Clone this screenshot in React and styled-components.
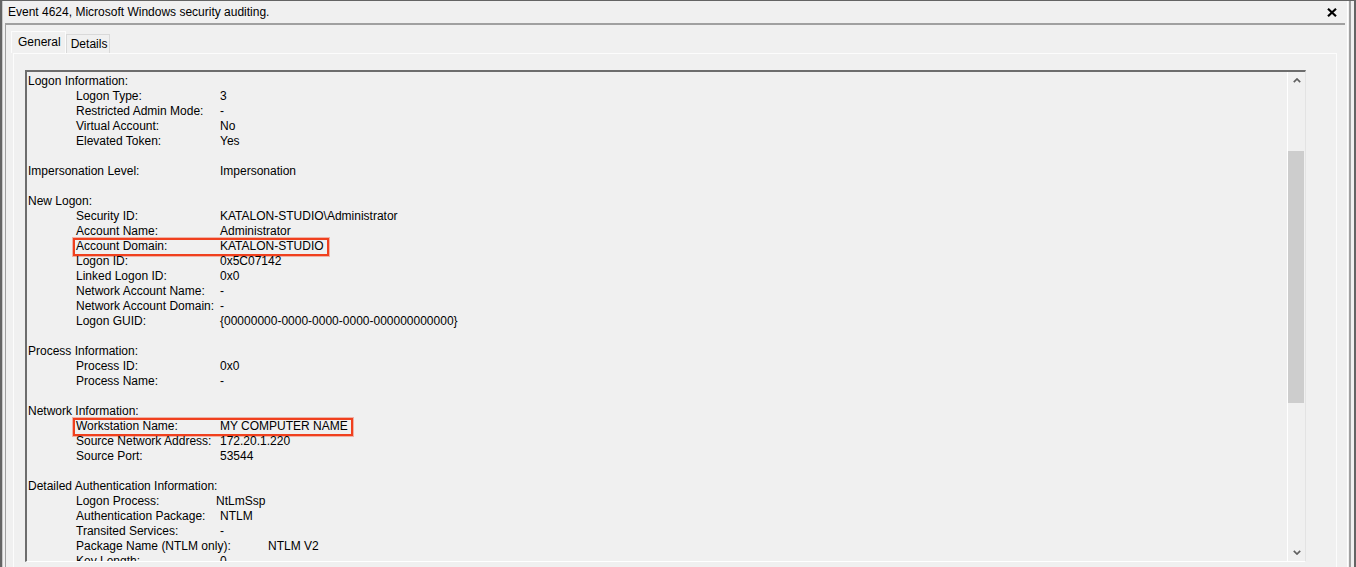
import React from 'react';
import styled, { createGlobalStyle } from 'styled-components';

const SECTIONS = [
  {
    title: 'Logon Information:',
    rows: [
      { label: 'Logon Type:', value: '3' },
      { label: 'Restricted Admin Mode:', value: '-' },
      { label: 'Virtual Account:', value: 'No' },
      { label: 'Elevated Token:', value: 'Yes' },
    ],
  },
  {
    line: { label: 'Impersonation Level:', value: 'Impersonation' },
  },
  {
    title: 'New Logon:',
    rows: [
      { label: 'Security ID:', value: 'KATALON-STUDIO\\Administrator' },
      { label: 'Account Name:', value: 'Administrator' },
      { label: 'Account Domain:', value: 'KATALON-STUDIO', marked: true },
      { label: 'Logon ID:', value: '0x5C07142' },
      { label: 'Linked Logon ID:', value: '0x0' },
      { label: 'Network Account Name:', value: '-' },
      { label: 'Network Account Domain:', value: '-' },
      { label: 'Logon GUID:', value: '{00000000-0000-0000-0000-000000000000}' },
    ],
  },
  {
    title: 'Process Information:',
    rows: [
      { label: 'Process ID:', value: '0x0' },
      { label: 'Process Name:', value: '-' },
    ],
  },
  {
    title: 'Network Information:',
    rows: [
      { label: 'Workstation Name:', value: 'MY COMPUTER NAME', marked: true },
      { label: 'Source Network Address:', value: '172.20.1.220' },
      { label: 'Source Port:', value: '53544' },
    ],
  },
  {
    title: 'Detailed Authentication Information:',
    rows: [
      { label: 'Logon Process:', value: 'NtLmSsp', nudge: -4 },
      { label: 'Authentication Package:', value: 'NTLM' },
      { label: 'Transited Services:', value: '-' },
      { label: 'Package Name (NTLM only):', value: 'NTLM V2', wide: true },
      { label: 'Key Length:', value: '0' },
    ],
  },
];

function Chevron({ down }) {
  return (
    <svg width="8" height="5" viewBox="0 0 8 5">
      <polyline
        points={down ? '0.8,0.8 4,4 7.2,0.8' : '0.8,4.2 4,1 7.2,4.2'}
        fill="none"
        stroke="#606060"
        strokeWidth="1.7"
      />
    </svg>
  );
}

function CloseIcon() {
  return (
    <svg width="10" height="9" viewBox="0 0 10 9">
      <path d="M1 0.8 L9 8.2 M9 0.8 L1 8.2" stroke="#000" strokeWidth="2.2" />
    </svg>
  );
}

function Field({ label, value, marked, nudge, wide, top }) {
  return (
    <Row $top={top}>
      <Pair $marked={marked}>
        <Label $width={top || wide ? 192 : 144}>{label}</Label>
        <Value $nudge={nudge}>{value}</Value>
      </Pair>
    </Row>
  );
}

function EventLog() {
  return (
    <LogText>
      {SECTIONS.map((section, i) => (
        <Section key={i}>
          {section.line ? (
            <Field top label={section.line.label} value={section.line.value} />
          ) : (
            <>
              <SectionTitle>{section.title}</SectionTitle>
              {section.rows.map((row) => (
                <Field key={row.label} {...row} />
              ))}
            </>
          )}
        </Section>
      ))}
    </LogText>
  );
}

function App() {
  return (
    <>
      <GlobalStyle />
      <Window>
        <Shell>
          <Header>
            <span>Event 4624, Microsoft Windows security auditing.</span>
            <CloseIcon />
          </Header>
          <Pane>
            <TabStrip>
              <Tab $active>General</Tab>
              <Tab>Details</Tab>
            </TabStrip>
            <Panel>
              <LogBox>
                <EventLog />
                <Scrollbar>
                  <ArrowButton>
                    <Chevron />
                  </ArrowButton>
                  <Track>
                    <Thumb $offset={62} $size={252} />
                  </Track>
                  <ArrowButton>
                    <Chevron down />
                  </ArrowButton>
                </Scrollbar>
              </LogBox>
            </Panel>
          </Pane>
        </Shell>
      </Window>
    </>
  );
}

const GlobalStyle = createGlobalStyle`
  html, body {
    margin: 0;
    padding: 0;
    background: #f0f0f0;
  }

  body {
    font-family: "Segoe UI", "Liberation Sans", Arial, sans-serif;
    font-size: 12px;
    color: #000000;
  }
`;

const Window = styled.div`
  height: 567px;
  box-sizing: border-box;
  display: flex;
  overflow: hidden;
  background: #f0f0f0;
  border-top: 1px solid #646464;
  border-left: 2px solid #646464;
  border-right: 2px solid #646464;
  padding-right: 3px;
`;

const Shell = styled.div`
  flex: 1;
  min-width: 0;
  display: flex;
  flex-direction: column;
  border-left: 1px solid #c8c8c8;
  border-right: 2px solid #a0a0a0;
  box-shadow: inset -1px 0 0 #f0f0f0, inset -2px 0 0 #ffffff;
`;

const Header = styled.div`
  height: 22px;
  flex: none;
  display: flex;
  align-items: center;
  justify-content: space-between;
  padding: 0 12px 0 5px;
`;

const Pane = styled.div`
  flex: 1;
  display: flex;
  flex-direction: column;
  margin: 0 4px 0 2px;
  padding: 6px 8px 0 7px;
  border-top: 2px solid #a0a0a0;
  border-left: 1px solid #a0a0a0;
`;

const TabStrip = styled.div`
  display: flex;
  align-items: flex-end;
  height: 22px;
  margin-left: -2px;
`;

const Tab = styled.div`
  box-sizing: border-box;
  height: ${(props) => (props.$active ? 22 : 19)}px;
  line-height: ${(props) => (props.$active ? 21 : 18)}px;
  padding: ${(props) => (props.$active ? '0 4px 0 6px' : '0 2px 0 4px')};
  border: 1px solid ${(props) => (props.$active ? '#fcfcfc' : '#d9d9d9')};
  border-bottom: none;
  background: #f0f0f0;
`;

const Panel = styled.div`
  flex: 1;
  border: 1px solid #fcfcfc;
  border-bottom: none;
  padding: 16px 30px 0 11px;
`;

const LogBox = styled.div`
  height: 492px;
  box-sizing: border-box;
  display: flex;
  border-style: solid;
  border-width: 2px 1px 1px 2px;
  border-color: #6d6d6d #e3e3e3 #ffffff #6d6d6d;
`;

const LogText = styled.div`
  flex: 1;
  min-width: 0;
  overflow: hidden;
  padding: 2px 0 0 1px;
  line-height: 15px;
  white-space: nowrap;
`;

const Section = styled.div`
  & + & {
    margin-top: 15px;
  }
`;

const SectionTitle = styled.div`
  height: 15px;
`;

const Row = styled.div`
  display: flex;
  height: 15px;
  padding-left: ${(props) => (props.$top ? 0 : 48)}px;
`;

const Pair = styled.span`
  position: relative;
  display: flex;

  ${(props) =>
    props.$marked &&
    `
    &::after {
      content: '';
      position: absolute;
      top: -1px;
      bottom: -2px;
      left: -3px;
      right: -5px;
      border: 2px solid #f0401e;
      box-shadow: 0 0 0 1px rgba(240, 64, 30, 0.35);
      pointer-events: none;
    }
  `}
`;

const Label = styled.span`
  flex: none;
  min-width: ${(props) => props.$width}px;
`;

const Value = styled.span`
  margin-left: ${(props) => props.$nudge || 0}px;
`;

const Scrollbar = styled.div`
  width: 17px;
  flex: none;
  display: flex;
  flex-direction: column;
  border-left: 1px solid #ffffff;
`;

const ArrowButton = styled.div`
  height: 17px;
  flex: none;
  display: flex;
  align-items: center;
  justify-content: center;
`;

const Track = styled.div`
  flex: 1;
`;

const Thumb = styled.div`
  margin: ${(props) => props.$offset}px 1px 0 0;
  height: ${(props) => props.$size}px;
  background: #cdcdcd;
`;

export default App;
